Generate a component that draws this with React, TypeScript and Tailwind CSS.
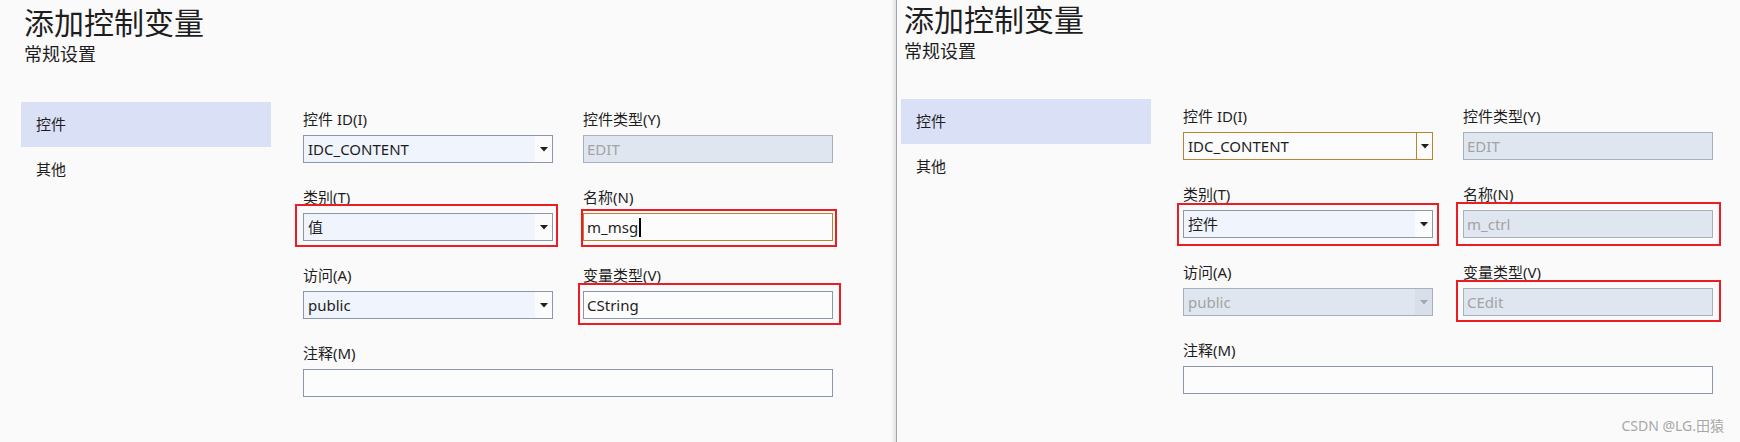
import React from "react";

type Red = { t: number; r: number; b: number; l: number };

const Arrow = ({ muted }: { muted?: boolean }) => (
  <svg width="8" height="5" viewBox="0 0 8 5">
    <polygon points="0,0 8,0 4,4.5" fill={muted ? "#a6a6a6" : "#1e1e1e"} />
  </svg>
);

const RedBox = ({ red }: { red?: Red }) =>
  red ? (
    <div
      className="absolute border-2 border-[#ec1c24] pointer-events-none"
      style={{ top: -red.t, right: -red.r, bottom: -red.b, left: -red.l }}
    />
  ) : null;

type FieldProps = {
  label: string;
  value?: string;
  kind: "combo" | "comboFocus" | "comboDisabled" | "text" | "textFocus" | "disabled";
  red?: Red;
  wide?: boolean;
};

const Field = ({ label, value, kind, red, wide }: FieldProps) => {
  let box: React.ReactNode;
  if (kind === "combo") {
    box = (
      <div className="flex h-[28px] border border-[#8b98ab] bg-[#f0f4fc]">
        <span className="flex-1 pl-[4px] leading-[26px]">{value}</span>
        <span className="flex w-[17px] items-center justify-center bg-[#fbfbfb]">
          <Arrow />
        </span>
      </div>
    );
  } else if (kind === "comboFocus") {
    box = (
      <div className="flex h-[28px] border border-[#b5862f] bg-[#fcfcfc]">
        <span className="flex-1 pl-[4px] leading-[26px]">{value}</span>
        <span className="flex w-[16px] items-center justify-center border-l border-[#b5862f]">
          <Arrow />
        </span>
      </div>
    );
  } else if (kind === "comboDisabled") {
    box = (
      <div className="flex h-[28px] border border-[#a7b0bd] bg-[#e0e6f0] text-[#a3a3a3]">
        <span className="flex-1 pl-[4px] leading-[26px]">{value}</span>
        <span className="flex w-[17px] items-center justify-center bg-[#d9dfea]">
          <Arrow muted />
        </span>
      </div>
    );
  } else if (kind === "disabled") {
    box = (
      <div className="h-[28px] border border-[#a7b0bd] bg-[#e0e6f0] pl-[3px] leading-[26px] text-[#a3a3a3]">
        {value}
      </div>
    );
  } else if (kind === "textFocus") {
    box = (
      <div className="flex h-[28px] items-center border border-[#b5862f] bg-[#fcfcfc] pl-[3px]">
        <span className="leading-[26px]">{value}</span>
        <span className="ml-px h-[19px] w-[2px] bg-black" />
      </div>
    );
  } else {
    box = (
      <div className="h-[28px] border border-[#8b98ab] bg-[#fcfcfc] pl-[3px] leading-[26px]">
        {value}
      </div>
    );
  }
  return (
    <div className={wide ? "col-span-2" : ""}>
      <div className="mb-[6px] h-[20px] leading-[20px]">{label}</div>
      <div className="relative">
        {box}
        <RedBox red={red} />
      </div>
    </div>
  );
};

type PanelProps = {
  right?: boolean;
};

const Panel = ({ right }: PanelProps) => (
  <div className={right ? "flex-1 pl-[4px] pt-[5px]" : "w-[896px] pl-[21px] pt-[8px]"}>
    <div className="ml-[3px] text-[30px] leading-[30px]">添加控制变量</div>
    <div className="ml-[3px] mt-[7px] text-[18px] leading-[18px]">常规设置</div>
    <div className="mt-[39px] flex">
      <div className="w-[250px]">
        <div className="h-[45px] bg-[#dae0f6] pl-[15px] leading-[45px]">控件</div>
        <div className="h-[45px] pl-[15px] leading-[45px]">其他</div>
      </div>
      <div className="ml-[32px] grid w-[530px] grid-cols-2 gap-x-[30px] gap-y-[24px] pt-[7px]">
        {right ? (
          <>
            <Field label="控件 ID(I)" value="IDC_CONTENT" kind="comboFocus" />
            <Field label="控件类型(Y)" value="EDIT" kind="disabled" />
            <Field label="类别(T)" value="控件" kind="combo" red={{ t: 7, r: 6, b: 8, l: 6 }} />
            <Field label="名称(N)" value="m_ctrl" kind="disabled" red={{ t: 8, r: 8, b: 8, l: 7 }} />
            <Field label="访问(A)" value="public" kind="comboDisabled" />
            <Field label="变量类型(V)" value="CEdit" kind="disabled" red={{ t: 8, r: 8, b: 6, l: 7 }} />
            <Field label="注释(M)" kind="text" wide />
          </>
        ) : (
          <>
            <Field label="控件 ID(I)" value="IDC_CONTENT" kind="combo" />
            <Field label="控件类型(Y)" value="EDIT" kind="disabled" />
            <Field label="类别(T)" value="值" kind="combo" red={{ t: 9, r: 5, b: 6, l: 8 }} />
            <Field label="名称(N)" value="m_msg" kind="textFocus" red={{ t: 4, r: 4, b: 6, l: 2 }} />
            <Field label="访问(A)" value="public" kind="combo" />
            <Field label="变量类型(V)" value="CString" kind="text" red={{ t: 8, r: 8, b: 6, l: 5 }} />
            <Field label="注释(M)" kind="text" wide />
          </>
        )}
      </div>
    </div>
  </div>
);

export default function App() {
  return (
    <div
      className="relative flex h-[442px] w-[1740px] overflow-hidden bg-[#fafafa] text-[15px] text-[#1e1e1e]"
      style={{ fontFamily: '"Noto Sans", "Noto Sans CJK SC", sans-serif' }}
    >
      <Panel />
      <div className="relative w-px bg-[#a3a3ab]">
        <div className="absolute right-px top-0 h-full w-[5px] bg-gradient-to-l from-[#e2e2e2] to-transparent" />
      </div>
      <Panel right />
      <div className="absolute bottom-[6px] right-[16px] text-[14px] text-[#a8a8a8]">CSDN @LG.田猿</div>
    </div>
  );
}
